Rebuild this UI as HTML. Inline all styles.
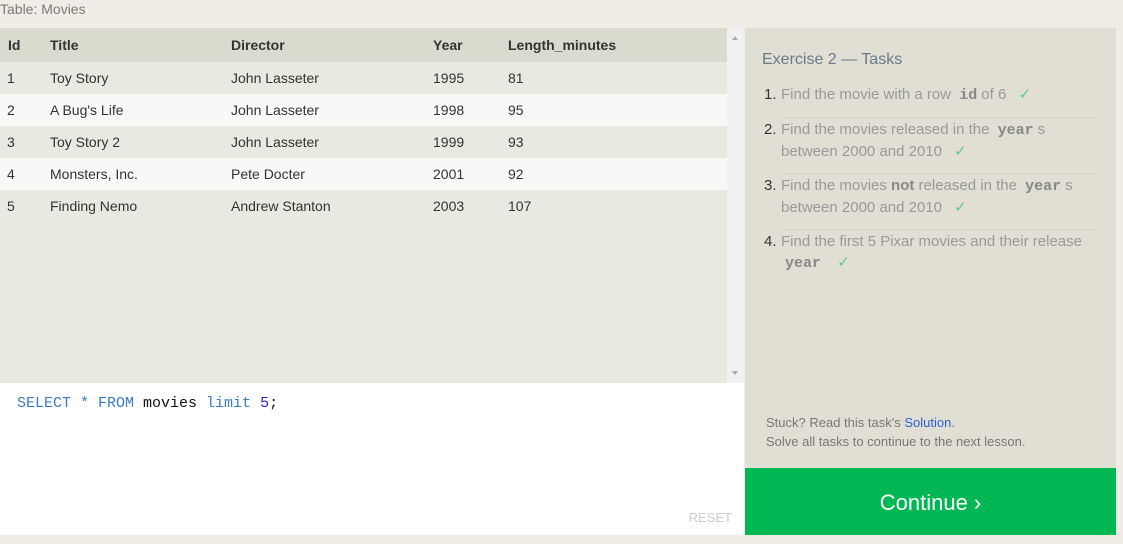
<!DOCTYPE html>
<html><head><style>
body{margin:0;width:1123px;height:544px;background:#f1ede6;font-family:"Liberation Sans",sans-serif;position:relative;overflow:hidden}
.cap{position:absolute;left:0;top:0;font-size:14px;color:#7a7a7a;line-height:18px}
.left{position:absolute;left:0;top:28px;width:744px;height:507px;background:#e9e8e1}
.tbl{position:absolute;left:0;top:0;width:727px}
.row{height:32px;position:relative;font-size:14px;color:#333}
.row span{position:absolute;top:8px}
.h{height:34px;background:#dbdacf;font-weight:bold;color:#333}
.h span{top:9px}
.alt{background:#f8f8f7}
.sb{position:absolute;left:727px;top:0;width:17px;height:355px;background:#f1f1f1}
.ed{position:absolute;left:0;top:355px;width:744px;height:152px;background:#fff}
.code{position:absolute;left:17px;top:12px;font-family:"Liberation Mono",monospace;font-size:15px;color:#3a7bc8}
.reset{position:absolute;right:12px;bottom:10px;font-size:13px;color:#ccc}
.right{position:absolute;left:745px;top:28px;width:371px;height:507px;background:#e1dfd4}
.ttl{position:absolute;left:17px;top:23px;font-size:16px;color:#6a7a88}
ol{position:absolute;left:16px;top:55px;margin:0;padding:0 0 0 20px;width:316px;font-size:15px;color:#999;line-height:21.5px;list-style:none}
ol li{padding:1px 0 10px 0;border-bottom:1px solid #d6d4c8;position:relative}
ol li:last-child{border:none}
ol li i{position:absolute;left:-17px;font-style:normal;color:#333}
code{font-family:"Liberation Mono",monospace;font-weight:bold;color:#888;padding:0 4px}
.ck{color:#5ec98a;margin-left:8px}
.stuck{position:absolute;left:21px;top:385px;font-size:13px;color:#777;line-height:19px}
.stuck a{color:#2a5fdc;text-decoration:none}
.btn{position:absolute;left:0;top:440px;width:371px;height:67px;background:#00b853;color:#fff;font-size:22px;text-align:center;line-height:70px}
</style></head><body>
<div class="cap">Table: Movies</div>
<div class="left">
<div class="tbl">
<div class="row h"><span style="left:8px">Id</span><span style="left:50px">Title</span><span style="left:231px">Director</span><span style="left:433px">Year</span><span style="left:508px">Length_minutes</span></div>
<div class="row"><span style="left:7px">1</span><span style="left:50px">Toy Story</span><span style="left:231px">John Lasseter</span><span style="left:433px">1995</span><span style="left:508px">81</span></div>
<div class="row alt"><span style="left:7px">2</span><span style="left:50px">A Bug's Life</span><span style="left:231px">John Lasseter</span><span style="left:433px">1998</span><span style="left:508px">95</span></div>
<div class="row"><span style="left:7px">3</span><span style="left:50px">Toy Story 2</span><span style="left:231px">John Lasseter</span><span style="left:433px">1999</span><span style="left:508px">93</span></div>
<div class="row alt"><span style="left:7px">4</span><span style="left:50px">Monsters, Inc.</span><span style="left:231px">Pete Docter</span><span style="left:433px">2001</span><span style="left:508px">92</span></div>
<div class="row"><span style="left:7px">5</span><span style="left:50px">Finding Nemo</span><span style="left:231px">Andrew Stanton</span><span style="left:433px">2003</span><span style="left:508px">107</span></div>
</div>
<div class="sb"><div style="position:absolute;left:5px;top:8px;border:3px solid transparent;border-bottom:4px solid #aaa;border-top:0"></div><div style="position:absolute;left:5px;bottom:8px;border:3px solid transparent;border-top:4px solid #aaa;border-bottom:0"></div></div>
<div class="ed"><div class="code">SELECT * FROM <span style="color:#111">movies</span>  limit <span style="color:#3c1fb8">5</span><span style="color:#111">;</span></div><div class="reset">RESET</div></div>
</div>
<div class="right">
<div class="ttl">Exercise 2 — Tasks</div>
<ol>
<li><i>1.</i>Find the movie with a row <code>id</code>of 6 <span class="ck">✓</span></li>
<li><i>2.</i>Find the movies released in the <code>year</code>s between 2000 and 2010 <span class="ck">✓</span></li>
<li><i>3.</i>Find the movies <b style="color:#888">not</b> released in the <code>year</code>s between 2000 and 2010 <span class="ck">✓</span></li>
<li><i>4.</i>Find the first 5 Pixar movies and their release <code>year</code> <span class="ck">✓</span></li>
</ol>
<div class="stuck">Stuck? Read this task's <a>Solution</a>.<br>Solve all tasks to continue to the next lesson.</div>
<div class="btn">Continue ›</div>
</div>
</body></html>
